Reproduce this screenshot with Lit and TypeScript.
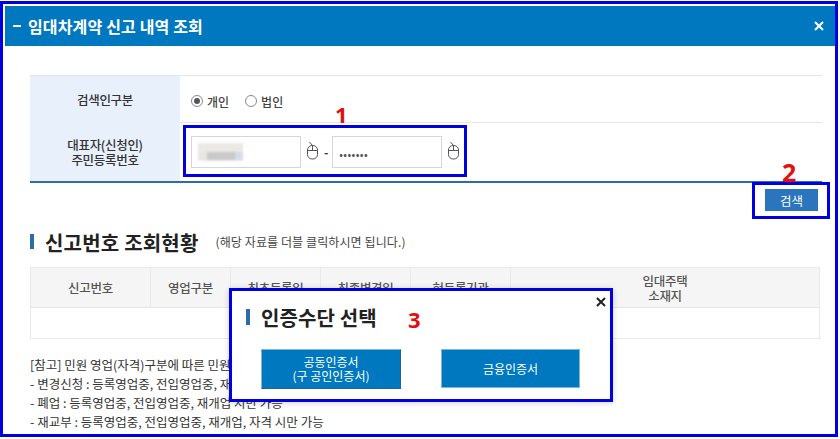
import { LitElement, html, css, svg } from "lit";
import { customElement } from "lit/decorators.js";

const mouse = svg`<svg class="mouse" width="13" height="19" viewBox="0 0 13 19" fill="none" stroke="#555" stroke-width="1"><path d="M3.5 1 L6.5 4.5"/><rect x="1.5" y="4.5" width="10" height="13.5" rx="4.5"/><path d="M1.5 9.5H11.5M6.5 4.5V9.5"/></svg>`;
const close = (c: string, w: number) => svg`<svg width="10" height="10" viewBox="0 0 10 10" stroke="${c}" stroke-width="${w}"><path d="M1 1L9 9M9 1L1 9"/></svg>`;

@customElement("app-root")
export class AppRoot extends LitElement {
  static styles = css`
    :host { display: block; width: 840px; height: 439px; overflow: hidden; background: #fff; position: relative;
      font-family: "Noto Sans CJK KR", "Noto Sans", sans-serif; color: #333; font-size: 12px; letter-spacing: -0.3px; }
    svg { display: block; }
    .frame { position: absolute; left: 0; top: 1px; width: 832px; height: 430px; border: 3px solid #0000e1; pointer-events: none; }
    .page { padding: 6px 5px 0 5px; display: flex; flex-direction: column; }
    .head { height: 40px; background: #0078c0; color: #fff; display: flex; align-items: center; justify-content: space-between;
      padding: 0 11px 0 8px; font-size: 16px; font-weight: 700; letter-spacing: 0.15px; box-sizing: border-box; }
    .htitle { display: flex; align-items: center; }
    .hdash { width: 8px; height: 2px; background: #fff; margin-right: 7px; }
    .body { padding: 29px 15px 0 25px; display: flex; flex-direction: column; }
    .form { width: 792px; border-top: 1px solid #e6e6e6; border-bottom: 2px solid #2e6ca4; display: grid; grid-template-columns: 150px 1fr; grid-template-rows: 46px 59px; }
    .lab { background: #e8f0fb; display: flex; align-items: center; justify-content: center; text-align: center;
      font-weight: 500; line-height: 15px; color: #333; font-size: 12.5px; }
    .cell { display: flex; align-items: center; padding-left: 11px; }
    .cell.r1 { border-bottom: 1px solid #e6e6e6; margin-bottom: -1px; padding-top: 4px; box-sizing: border-box; }
    .radio { display: flex; align-items: center; gap: 4px; margin-right: 16px; font-size: 12px; color: #444; font-weight: 500; letter-spacing: 0; }
    .dot { width: 10px; height: 10px; border: 1px solid #888; border-radius: 50%; display: flex; align-items: center; justify-content: center; background: #fff; }
    .dot.on::after { content: ""; width: 6px; height: 6px; border-radius: 50%; background: #555; }
    .inp { height: 30px; border: 1px solid #d6d6d6; display: flex; align-items: center; padding-left: 6px; box-sizing: content-box; width: 102px; background: #fff; }
    .blur { width: 45px; height: 18px; filter: blur(1.2px);
      background: linear-gradient(90deg, #e9e7e4 0 20%, #c9c9cb 20% 82%, #d4dce6 82%) bottom / 100% 45% no-repeat, #ebe9e6; }
    .pw { font-size: 11px; letter-spacing: 0.4px; color: #555; padding-top: 5px; }
    .mouse { margin-top: -3px; }
    .m1 { margin: 0 5px; }
    .sep { margin-right: 4px; font-size: 12px; font-weight: 700; }
    .actions { display: flex; justify-content: flex-end; padding: 6px 2px 0 0; }
    .btn { width: 53px; height: 22px; border: 0; background: #2b75bd; color: #fff; font: inherit; font-size: 12.5px; letter-spacing: 0; display: flex; align-items: center; justify-content: center; }
    .h2row { display: flex; align-items: center; margin-top: 20px; height: 24px; }
    .bar { width: 4px; height: 15px; background: #2e6ca4; margin-right: 11px; }
    .h2row .bar { margin-top: -3px; }
    .h2 { font-size: 20px; font-weight: 700; color: #222; letter-spacing: 0.2px; margin-right: 17px; line-height: 24px; }
    .note { font-size: 12px; color: #444; letter-spacing: 0.1px; margin-top: -4px; }
    .tbl { margin-top: 12px; width: 790px; border: 1px solid #e9e9e9; box-sizing: border-box; display: grid;
      grid-template-columns: 120px 80px 90px 90px 100px 1fr; grid-template-rows: 40px 30px; }
    .th { background: #f5f5f5; border-right: 1px solid #e9e9e9; border-bottom: 1px solid #e4e4e4; display: flex; align-items: center; justify-content: center; text-align: center; line-height: 15px; font-weight: 500; color: #555; font-size: 12.5px; }
    .th:nth-child(6) { border-right: 0; }
    .td { grid-column: 1 / -1; }
    .refs { margin-top: 16px; line-height: 19px; font-size: 12.5px; color: #333; letter-spacing: 0; white-space: nowrap; }
    .modal { position: absolute; left: 229px; top: 288px; width: 378px; height: 108px; background: #fff; border: 3px solid #0000e1; box-shadow: 0 1px 6px rgba(0,0,0,.18); }
    .mhead { display: flex; align-items: center; padding: 18px 0 0 14px; height: 16px; }
    .mhead .bar { margin-right: 11px; width: 4px; height: 16px; }
    .mtitle { font-size: 20px; font-weight: 700; color: #222; letter-spacing: 0.1px; }
    .mclose { position: absolute; right: 4px; top: 6px; display: block; }
    .mbtns { display: flex; gap: 40px; padding: 24px 0 0 29px; }
    .mbtn { width: 140px; height: 39px; background: #0078c0; color: #fff; display: flex; align-items: center; justify-content: center; text-align: center; line-height: 14px; font-size: 12px; letter-spacing: 0; border: 1px solid #7fb6d8; box-sizing: border-box; }
    .mbtn.b { width: 139px; }
    .mbtn.a { height: 40px; border-right-color: #2a5f8a; border-bottom-color: #2a5f8a; }
    .ann { position: absolute; border: 3px solid #0000e1; box-sizing: border-box; pointer-events: none; }
    .a1 { left: 183px; top: 125px; width: 284px; height: 52px; }
    .a2 { left: 752px; top: 182px; width: 78px; height: 37px; }
    .num { position: absolute; color: #e01010; font-weight: 700; font-size: 22px; line-height: 20px; letter-spacing: 0; font-family: "Noto Sans", sans-serif; }
    .n1 { left: 335px; top: 104px; }
    .n2 { left: 782px; top: 162px; font-size: 25px; }
    .n3 { left: 408px; top: 309px; }
  `;

  render() {
    return html`
      <div class="page">
        <div class="head"><span class="htitle"><span class="hdash"></span>임대차계약 신고 내역 조회</span>${close("#fff", 2)}</div>
        <div class="body">
          <div class="form">
            <div class="lab">검색인구분</div>
            <div class="cell r1">
              <label class="radio"><span class="dot on"></span>개인</label>
              <label class="radio"><span class="dot"></span>법인</label>
            </div>
            <div class="lab">대표자(신청인)<br />주민등록번호</div>
            <div class="cell">
              <div class="inp"><div class="blur"></div></div>
              <span class="m1">${mouse}</span>
              <span class="sep">-</span>
              <div class="inp"><span class="pw">•••••••</span></div>
              <span class="m1">${mouse}</span>
            </div>
          </div>
          <div class="actions"><button class="btn">검색</button></div>
          <div class="h2row">
            <span class="bar"></span><span class="h2">신고번호 조회현황</span>
            <span class="note">(해당 자료를 더블 클릭하시면 됩니다.)</span>
          </div>
          <div class="tbl">
            <div class="th">신고번호</div><div class="th">영업구분</div><div class="th">최초등록일</div>
            <div class="th">최종변경일</div><div class="th">현등록기관</div><div class="th">임대주택<br />소재지</div>
            <div class="td"></div>
          </div>
          <div class="refs">
            [참고] 민원 영업(자격)구분에 따른 민원 신청 가능 여부<br />
            - 변경신청 : 등록영업중, 전입영업중, 재개업, 자격 시만 가능<br />
            - 폐업 : 등록영업중, 전입영업중, 재개업 시만 가능<br />
            - 재교부 : 등록영업중, 전입영업중, 재개업, 자격 시만 가능
          </div>
        </div>
      </div>
      <div class="modal">
        <div class="mhead"><span class="bar"></span><span class="mtitle">인증수단 선택</span></div>
        <span class="mclose">${close("#222", 2)}</span>
        <div class="mbtns">
          <div class="mbtn a">공동인증서<br />(구 공인인증서)</div>
          <div class="mbtn b">금융인증서</div>
        </div>
      </div>
      <div class="frame"></div>
      <div class="ann a1"></div>
      <div class="ann a2"></div>
      <span class="num n1">1</span><span class="num n2">2</span><span class="num n3">3</span>
    `;
  }
}
